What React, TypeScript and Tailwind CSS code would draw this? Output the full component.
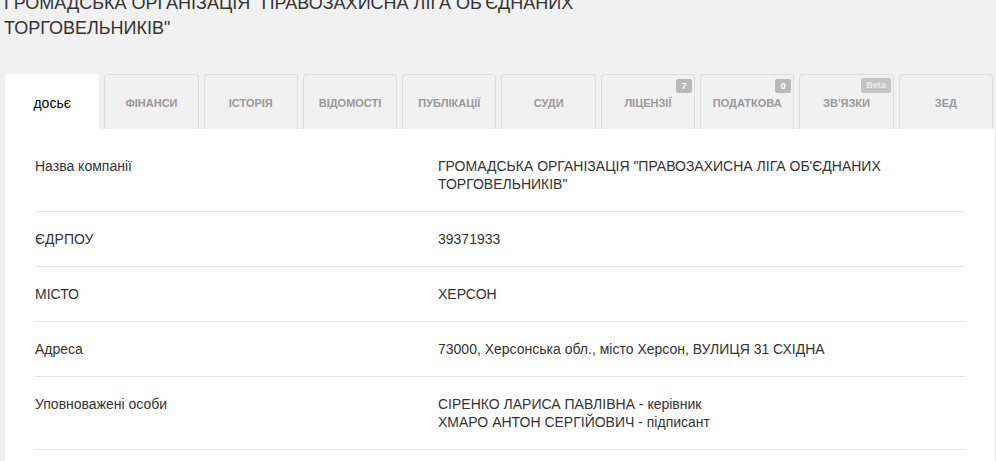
import React from "react";

const tabs: { label: string; badge?: string; beta?: boolean }[] = [
  { label: "ФІНАНСИ" },
  { label: "ІСТОРІЯ" },
  { label: "ВІДОМОСТІ" },
  { label: "ПУБЛІКАЦІЇ" },
  { label: "СУДИ" },
  { label: "ЛІЦЕНЗІЇ", badge: "7" },
  { label: "ПОДАТКОВА", badge: "0" },
  { label: "ЗВ'ЯЗКИ", badge: "Beta", beta: true },
  { label: "ЗЕД" },
];

const rows: { label: string; value: string[] }[] = [
  {
    label: "Назва компанії",
    value: ['ГРОМАДСЬКА ОРГАНІЗАЦІЯ "ПРАВОЗАХИСНА ЛІГА ОБ\'ЄДНАНИХ ТОРГОВЕЛЬНИКІВ"'],
  },
  { label: "ЄДРПОУ", value: ["39371933"] },
  { label: "МІСТО", value: ["ХЕРСОН"] },
  { label: "Адреса", value: ["73000, Херсонська обл., місто Херсон, ВУЛИЦЯ 31 СХІДНА"] },
  {
    label: "Уповноважені особи",
    value: ["СІРЕНКО ЛАРИСА ПАВЛІВНА - керівник", "ХМАРО АНТОН СЕРГІЙОВИЧ - підписант"],
  },
];

export default function App() {
  return (
    <div
      className="min-h-screen w-full overflow-hidden bg-[#f1f1f1] text-[#333]"
      style={{ fontFamily: '"Liberation Sans", Arial, sans-serif' }}
    >
      <h1 className="mt-[-9px] max-w-[620px] pl-[4px] text-[18px] font-normal leading-[25px] text-[#333]">
        ГРОМАДСЬКА ОРГАНІЗАЦІЯ "ПРАВОЗАХИСНА ЛІГА ОБ'ЄДНАНИХ ТОРГОВЕЛЬНИКІВ"
      </h1>

      <div className="mt-[33px] flex gap-[5px] pl-[5px] pr-[3px]">
        <div className="flex h-[55px] flex-1 items-center justify-center rounded-t-[4px] border border-b-0 border-white bg-white pt-[3px] text-[14px] text-black">
          досьє
        </div>
        {tabs.map((t) => (
          <div
            key={t.label}
            className="relative flex h-[55px] flex-1 items-center justify-center rounded-t-[4px] border border-b-0 border-[#dcdcdc] bg-[#f1f1f1] pt-[3px] text-[11px] font-bold text-[#999]"
          >
            {t.label}
            {t.badge && (
              <span
                className={
                  t.beta
                    ? "absolute right-[2px] top-[3px] h-[15px] rounded-[2px] bg-[#c4c4c4] px-[5px] text-[9px] font-bold leading-[15px] text-[#ececec]"
                    : "absolute right-[2px] top-[4px] h-[14px] min-w-[16px] rounded-[2px] bg-[#b9b9b9] px-[4px] text-center text-[9px] font-bold leading-[14px] text-white"
                }
              >
                {t.badge}
              </span>
            )}
          </div>
        ))}
      </div>

      <div className="ml-[5px] min-h-[340px] border-r border-[#e3e3e3] bg-white px-[30px] pt-[10px]">
        {rows.map((r) => (
          <div
            key={r.label}
            className="flex border-b border-[#e5e5e5] pb-[18px] pt-[18px] text-[14px] leading-[18px] text-[#333]"
          >
            <div className="w-[403px] shrink-0">{r.label}</div>
            <div className="flex-1">
              {r.value.map((v) => (
                <div key={v}>{v}</div>
              ))}
            </div>
          </div>
        ))}
      </div>
    </div>
  );
}
